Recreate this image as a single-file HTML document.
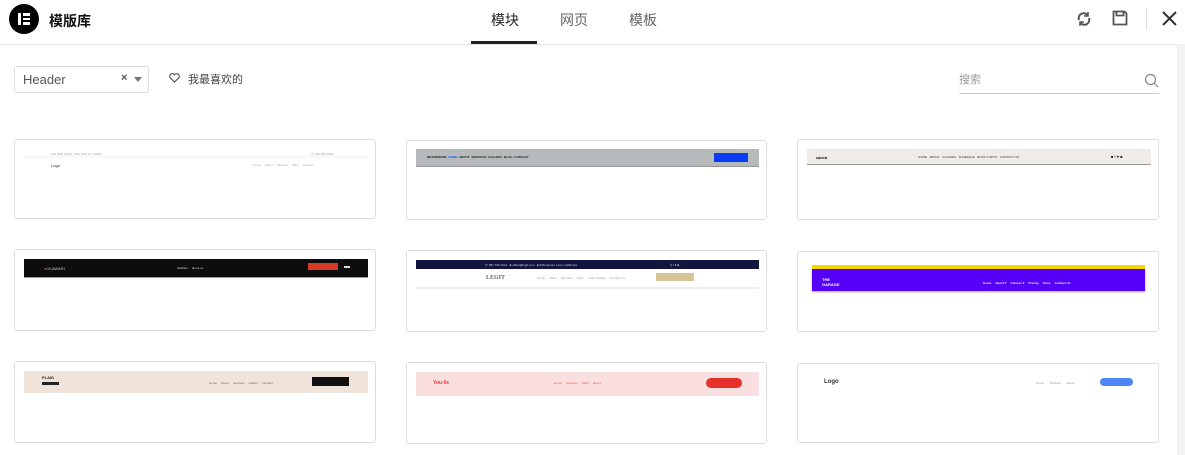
<!DOCTYPE html>
<html><head><meta charset="utf-8"><style>
*{margin:0;padding:0;box-sizing:border-box}
body{width:1185px;height:455px;overflow:hidden;background:#fff;font-family:"Liberation Sans","Noto Sans CJK SC",sans-serif;position:relative;color:#333}
.a{position:absolute}
.card{position:absolute;border:1px solid #ddd;border-radius:3px;background:#fff;overflow:hidden}
.t{position:absolute;font-size:3px;white-space:nowrap}
</style></head><body>
<div class="a" style="left:9px;top:4px;width:30px;height:30px;border-radius:50%;background:#000"></div>
<div class="a" style="left:18px;top:13px;width:3px;height:12px;background:#fff"></div>
<div class="a" style="left:23px;top:13px;width:7px;height:2.5px;background:#fff"></div>
<div class="a" style="left:23px;top:17.7px;width:7px;height:2.5px;background:#fff"></div>
<div class="a" style="left:23px;top:22.3px;width:7px;height:2.5px;background:#fff"></div>
<div class="a" style="left:49px;top:11px;font-size:14px;font-weight:bold;color:#111">模版库</div>
<div class="a" style="left:491px;top:10px;font-size:14px;color:#222">模块</div>
<div class="a" style="left:471px;top:41px;width:66px;height:3px;background:#222"></div>
<div class="a" style="left:560px;top:10px;font-size:14px;color:#666">网页</div>
<div class="a" style="left:629px;top:10px;font-size:14px;color:#666">模板</div>
<svg class="a" style="left:1076px;top:11px" width="16" height="16" viewBox="0 0 16 16" fill="none" stroke="#555" stroke-width="2"><path d="M3 9a5 5 0 0 1 8.5-5"/><path d="M13 7a5 5 0 0 1-8.5 5"/><path d="M12 1v4H8" stroke-width="1.6"/><path d="M4 15v-4h4" stroke-width="1.6"/></svg>
<svg class="a" style="left:1112px;top:10px" width="16" height="16" viewBox="0 0 16 16" fill="none" stroke="#555" stroke-width="1.8"><path d="M1.5 1.5h11l2 2v11h-13z"/><path d="M4.5 1.5v4h7v-4"/></svg>
<div class="a" style="left:1146px;top:8px;width:1px;height:22px;background:#ddd"></div>
<svg class="a" style="left:1162px;top:11px" width="15" height="15" viewBox="0 0 15 15" stroke="#333" stroke-width="2"><path d="M1 1l13 13M14 1L1 14"/></svg>
<div class="a" style="left:0;top:44px;width:1177px;height:1px;background:#e5e5e5"></div>
<div class="a" style="left:1177px;top:44px;width:8px;height:411px;background:#f3f3f3"></div>
<div class="a" style="left:14px;top:66px;width:135px;height:27px;border:1px solid #ddd;border-radius:3px"></div>
<div class="a" style="left:23px;top:72px;font-size:13px;color:#555">Header</div>
<div class="a" style="left:121px;top:72px;font-size:11px;color:#555;font-weight:bold">×</div>
<div class="a" style="left:134px;top:77px;width:0;height:0;border-left:4px solid transparent;border-right:4px solid transparent;border-top:5px solid #777"></div>
<svg class="a" style="left:169px;top:73px" width="11" height="10" viewBox="0 0 11 10" fill="none" stroke="#555" stroke-width="1.2"><path d="M5.5 9L1.2 4.8A2.4 2.4 0 0 1 5.5 1.8A2.4 2.4 0 0 1 9.8 4.8z"/></svg>
<div class="a" style="left:188px;top:71px;font-size:11px;color:#444">我最喜欢的</div>
<div class="a" style="left:959px;top:71px;font-size:11px;color:#999">搜索</div>
<div class="a" style="left:959px;top:93px;width:200px;height:1px;background:#ccc"></div>
<svg class="a" style="left:1144px;top:73px" width="15" height="15" viewBox="0 0 15 15" fill="none" stroke="#888" stroke-width="1.2"><circle cx="6.5" cy="6.5" r="5"/><path d="M10 10l4 4"/></svg>

<div class="card" style="left:14px;top:139px;width:362px;height:80px">
 <div class="a" style="left:9px;top:8px;width:344px;height:18px;background:linear-gradient(#fff 0,#fff 40%,#f4f4f4 45%,#fff 60%)"></div>
 <div class="t" style="left:36px;top:12px;color:#999">123 Main Street, New York, NY 10001</div>
 <div class="t" style="left:296px;top:12px;color:#999">☏ 123-456-7890</div>
 <div class="t" style="left:36px;top:23px;color:#333;font-size:4px">Logo</div>
 <div class="t" style="left:238px;top:23px;color:#aaa">Home &nbsp; &nbsp; About &nbsp; &nbsp; Services &nbsp; &nbsp; Blog &nbsp; &nbsp; Contact</div>
</div>
<div class="card" style="left:406px;top:140px;width:361px;height:80px">
 <div class="a" style="left:9px;top:8px;width:343px;height:18px;background:#b6baba;border-bottom:1px solid #999"></div>
 <div class="t" style="left:20px;top:14px;color:#222;font-weight:bold">BRANDNAME &nbsp;<span style="color:#15f">HOME</span> &nbsp;ABOUT &nbsp;SERVICES &nbsp;GALLERY &nbsp;BLOG &nbsp;CONTACT</div>
 <div class="a" style="left:307px;top:12px;width:34px;height:9px;background:#0b3cf5"></div>
</div>
<div class="card" style="left:797px;top:139px;width:362px;height:81px">
 <div class="a" style="left:9px;top:9px;width:344px;height:16px;background:#efebe7;border-bottom:1px solid #999"></div>
 <div class="t" style="left:18px;top:15px;color:#222;font-weight:bold;font-size:4px">ᴇꜱᴏᴘꜱ</div>
 <div class="t" style="left:120px;top:15px;color:#333">HOME &nbsp; ABOUT &nbsp; CLASSES &nbsp; SCHEDULE &nbsp; BOOK A SPOT &nbsp; CONTACT US</div>
 <div class="t" style="left:313px;top:14px;color:#222;font-size:4px">■ f ♥ ■</div>
</div>
<div class="card" style="left:14px;top:249px;width:362px;height:82px">
 <div class="a" style="left:9px;top:9px;width:344px;height:19px;background:#0d0d0d;border-bottom:1px solid #999"></div>
 <div class="t" style="left:29px;top:16px;color:#ccc;font-size:4px"><span style="color:#d33">●</span>CKAWARI</div>
 <div class="t" style="left:162px;top:16px;color:#ccc">facilities &nbsp; &nbsp; about us</div>
 <div class="a" style="left:293px;top:13px;width:30px;height:7px;background:#d63a25"></div>
 <div class="a" style="left:329px;top:16px;width:6px;height:2px;border-top:1px solid #ddd;border-bottom:1px solid #ddd"></div>
</div>
<div class="card" style="left:406px;top:250px;width:361px;height:82px">
 <div class="a" style="left:9px;top:9px;width:343px;height:9px;background:#141440"></div>
 <div class="t" style="left:78px;top:12px;color:#ccc">☏ 987 765 4321 &nbsp; ■ office@legit.com &nbsp; ■ 916 Hoover Lane, California</div>
 <div class="t" style="left:263px;top:12px;color:#ccc">⚲ f ♥ ■</div>
 <div class="a" style="left:9px;top:18px;width:343px;height:20px;background:#fff;border-bottom:2px solid #eee"></div>
 <div class="t" style="left:79px;top:24px;color:#666;font-size:6px;font-weight:bold;font-family:'Liberation Serif',serif">LEGIT</div>
 <div class="t" style="left:130px;top:25px;color:#999">Home &nbsp; &nbsp; About &nbsp; &nbsp; Services &nbsp; &nbsp; Team &nbsp; &nbsp; Case Studies &nbsp; &nbsp; Contact Us</div>
 <div class="a" style="left:249px;top:22px;width:38px;height:8px;background:#d8c597"></div>
</div>
<div class="card" style="left:797px;top:251px;width:362px;height:81px">
 <div class="a" style="left:14px;top:13px;width:333px;height:4px;background:#fbd700"></div>
 <div class="a" style="left:14px;top:17px;width:333px;height:22px;background:#5600f8;box-shadow:0 1px 2px #aaa"></div>
 <div class="t" style="left:24px;top:25px;color:#fff;font-weight:bold;font-size:4px">THE<br>GARAGE</div>
 <div class="t" style="left:185px;top:29px;color:#eee;font-weight:bold">Home &nbsp; &nbsp; About ▾ &nbsp; &nbsp; Classes ▾ &nbsp; &nbsp; Pricing &nbsp; &nbsp; Store &nbsp; &nbsp; Contact Us</div>
</div>
<div class="card" style="left:14px;top:361px;width:362px;height:82px">
 <div class="a" style="left:9px;top:9px;width:344px;height:22px;background:#f0e4da"></div>
 <div class="a" style="left:27px;top:14px;width:17px;height:9px;border-bottom:3px solid #222"></div>
 <div class="t" style="left:27px;top:13px;color:#222;font-weight:bold;font-size:4px">PLAID</div>
 <div class="t" style="left:194px;top:19px;color:#666">Home &nbsp; &nbsp; About &nbsp; &nbsp; Services &nbsp; &nbsp; Gallery &nbsp; &nbsp; Contact</div>
 <div class="a" style="left:297px;top:15px;width:37px;height:9px;background:#111"></div>
</div>
<div class="card" style="left:406px;top:362px;width:361px;height:82px">
 <div class="a" style="left:9px;top:9px;width:343px;height:24px;background:#f9dfe0"></div>
 <div class="t" style="left:26px;top:17px;color:#e33;font-weight:bold;font-size:5px">You·lic</div>
 <div class="t" style="left:147px;top:18px;color:#e55">Home &nbsp; &nbsp; Services &nbsp; &nbsp; Work &nbsp; &nbsp; Event</div>
 <div class="a" style="left:299px;top:15px;width:36px;height:10px;border-radius:5px;background:#e8302a"></div>
</div>
<div class="card" style="left:797px;top:363px;width:362px;height:80px">
 <div class="t" style="left:26px;top:15px;color:#333;font-size:6px;font-weight:bold">Logo</div>
 <div class="t" style="left:238px;top:17px;color:#999">Home &nbsp; &nbsp; &nbsp; Portfolio &nbsp; &nbsp; &nbsp; About</div>
 <div class="a" style="left:302px;top:14px;width:33px;height:8px;border-radius:4px;background:#4c86f5"></div>
</div>
</body></html>
